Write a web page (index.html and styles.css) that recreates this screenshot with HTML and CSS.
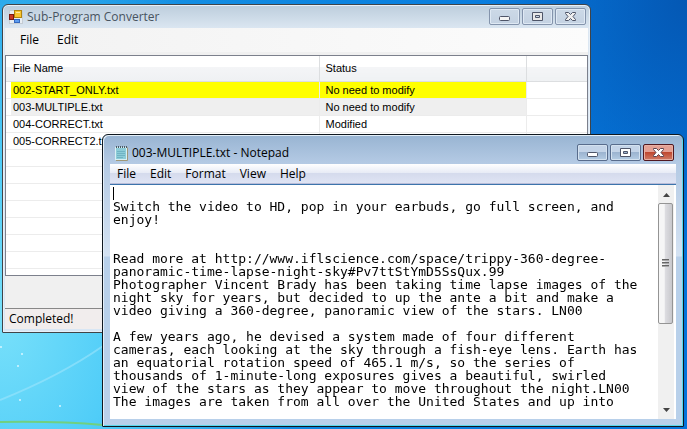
FILE: index.html
```html
<!DOCTYPE html>
<html lang="en">
<head>
<meta charset="utf-8">
<title>Desktop</title>
<link rel="stylesheet" href="styles.css">
</head>
<body>
<main class="desktop">
  <svg class="wallpaper" viewBox="0 0 687 429" preserveAspectRatio="none" aria-hidden="true">
    <path d="M0 400Q60 376 103 346" stroke="#9ce4fb" stroke-width="2" fill="none" opacity=".6"/>
    <path d="M0 422Q60 421 103 425" stroke="#70d080" stroke-width="2" fill="none"/>
    <g fill="#d8f6ff"><circle cx="60" cy="406" r="1"/><circle cx="22" cy="354" r="1"/><circle cx="18" cy="366" r="1"/><circle cx="1" cy="347" r="1"/><circle cx="20" cy="400" r="1"/></g>
  </svg>

  <section class="window converter" aria-label="Sub-Program Converter">
    <header class="titlebar">
      <svg class="app-icon" width="14" height="14" viewBox="0 0 14 14" aria-hidden="true">
        <rect x=".5" y=".5" width="13" height="13" fill="#e8edf2" stroke="#c4ccd4"/>
        <rect x="5.500" y=".5" width="7" height="7" fill="#f8c430" stroke="#b08410"/>
        <path d="M7 2.500h4" stroke="#fce8a0"/>
        <rect x=".5" y="4.500" width="4" height="5" fill="#c83824" stroke="#7c1810"/>
        <rect x="5.500" y="9.500" width="5" height="3" fill="#5c9cf0" stroke="#3468c0"/>
      </svg>
      <h1 class="title">Sub-Program Converter</h1>
      <div class="controls">
        <button class="control" aria-label="Minimize"><svg width="11" height="9" viewBox="0 0 11 9"><rect x=".5" y="4.500" width="10" height="4" rx="1" fill="#f4f4f4" stroke="#4e5568"/></svg></button>
        <button class="control" aria-label="Maximize"><svg width="11" height="9" viewBox="0 0 11 9"><path d="M.5 .5h10v8h-10zM3.500 3.500v2h4v-2z" fill="#e8e8e8" fill-rule="evenodd" stroke="#4e5568"/></svg></button>
        <button class="control" aria-label="Close"><svg width="11" height="9" viewBox="0 0 11 9"><path d="M.5 .5h3l2 2 2-2h3v1l-2.500 3 2.500 3v1h-3l-2-2-2 2h-3v-1l2.500-3-2.500-3z" fill="#f0f0f0" stroke="#4e5568"/></svg></button>
      </div>
    </header>
    <div class="client">
      <nav class="menubar">
        <button class="menu">File</button>
        <button class="menu">Edit</button>
      </nav>
      <div class="list">
        <table class="files">
          <colgroup><col class="col-name"><col class="col-status"><col></colgroup>
          <thead><tr><th>File Name</th><th>Status</th><th></th></tr></thead>
          <tbody>
            <tr class="changed"><td>002-START_ONLY.txt</td><td>No need to modify</td><td></td></tr>
            <tr class="selected"><td>003-MULTIPLE.txt</td><td>No need to modify</td><td></td></tr>
            <tr><td>004-CORRECT.txt</td><td>Modified</td><td></td></tr>
            <tr><td>005-CORRECT2.txt</td><td></td><td></td></tr>
            <tr><td></td><td></td><td></td></tr>
            <tr><td></td><td></td><td></td></tr>
            <tr><td></td><td></td><td></td></tr>
            <tr><td></td><td></td><td></td></tr>
            <tr><td></td><td></td><td></td></tr>
            <tr><td></td><td></td><td></td></tr>
            <tr><td></td><td></td><td></td></tr>
          </tbody>
        </table>
      </div>
      <footer class="status">Completed!</footer>
    </div>
  </section>

  <section class="window notepad" aria-label="Notepad">
    <header class="titlebar">
      <svg class="app-icon" width="15" height="16" viewBox="0 0 15 16" aria-hidden="true">
        <path d="M2 15.500h11.500v-13" fill="none" stroke="#a09878"/>
        <rect x="1.500" y="2.500" width="11" height="12" fill="#8cccd8" stroke="#d8f0f4"/>
        <path d="M3 6.500h8M3 8.500h8M3 10.500h8M3 12.500h6" stroke="#70b4c4"/>
        <path d="M2.500 1v2M4.500 1v2M6.500 1v2M8.500 1v2M10.500 1v2M12.500 1v2" stroke="#4c5c64"/>
      </svg>
      <h2 class="title">003-MULTIPLE.txt - Notepad</h2>
      <div class="controls">
        <button class="control" aria-label="Minimize"><svg width="11" height="9" viewBox="0 0 11 9"><rect x=".5" y="4.500" width="10" height="4" rx="1" fill="#fff" stroke="#4e5568"/></svg></button>
        <button class="control" aria-label="Maximize"><svg width="11" height="9" viewBox="0 0 11 9"><path d="M.5 .5h10v8h-10zM3.500 3.500v2h4v-2z" fill="#fff" fill-rule="evenodd" stroke="#4e5568"/></svg></button>
        <button class="control close" aria-label="Close"><svg width="11" height="9" viewBox="0 0 11 9"><path d="M.5 .5h3l2 2 2-2h3v1l-2.500 3 2.500 3v1h-3l-2-2-2 2h-3v-1l2.500-3-2.500-3z" fill="#fff" stroke="#5e4550"/></svg></button>
      </div>
    </header>
    <div class="client">
      <nav class="menubar">
        <button class="menu">File</button>
        <button class="menu">Edit</button>
        <button class="menu">Format</button>
        <button class="menu">View</button>
        <button class="menu">Help</button>
      </nav>
      <div class="editor">
        <textarea class="text" aria-label="Document text" spellcheck="false" autofocus>

Switch the video to HD, pop in your earbuds, go full screen, and
enjoy!


Read more at http://www.iflscience.com/space/trippy-360-degree-
panoramic-time-lapse-night-sky#Pv7ttStYmD5SsQux.99
Photographer Vincent Brady has been taking time lapse images of the
night sky for years, but decided to up the ante a bit and make a
video giving a 360-degree, panoramic view of the stars. LN00

A few years ago, he devised a system made of four different
cameras, each looking at the sky through a fish-eye lens. Earth has
an equatorial rotation speed of 465.1 m/s, so the series of
thousands of 1-minute-long exposures gives a beautiful, swirled
view of the stars as they appear to move throughout the night.LN00
The images are taken from all over the United States and up into</textarea>
        <span class="caret"></span>
        <div class="scrollbar">
          <button class="arrow" aria-label="Scroll up"><svg width="7" height="4" viewBox="0 0 7 4"><path d="M0 4L3.500 0 7 4z" fill="#444"/></svg></button>
          <div class="track"><div class="thumb"><svg width="7" height="8" viewBox="0 0 7 8"><path d="M0 .5h7M0 3.500h7M0 6.500h7" stroke="#666"/><path d="M0 1.500h7M0 4.500h7M0 7.500h7" stroke="#aaa"/></svg></div></div>
          <button class="arrow" aria-label="Scroll down"><svg width="7" height="4" viewBox="0 0 7 4"><path d="M0 0h7L3.500 4z" fill="#444"/></svg></button>
        </div>
      </div>
    </div>
  </section>
</main>
</body>
</html>
```
FILE: styles.css
```css
* { box-sizing: border-box; }

body {
  margin: 0;
  font: 12px/16px "Open Sans", "Noto Sans", sans-serif;
  color: #000;
}

button {
  margin: 0;
  padding: 0;
  border: 0;
  background: none;
  color: inherit;
  font: inherit;
}

.desktop {
  position: relative;
  min-height: 100vh;
  overflow: hidden;
  background:
    radial-gradient(ellipse 300px 400px at 0 75%, #78e0fa 0, #50cdf8 40%, rgba(40, 165, 236, 0) 100%),
    radial-gradient(ellipse 200px 260px at 100% 0, #0458b4 0, rgba(4, 88, 180, 0) 100%),
    linear-gradient(90deg, #1c9ae6 0%, #0c84e0 50%, #0474dc 100%);
}

.wallpaper { display: block; position: absolute; inset: 0; width: 100%; height: 100%; }

.window {
  position: absolute;
  display: flex;
  flex-direction: column;
  border: 1px solid #404448;
  border-radius: 6px 6px 1px 1px;
  overflow: hidden;
}

.converter {
  inset: 4px 96px 96px 2px;
  padding: 0 2px 3px;
  background: linear-gradient(#bccddc, #dce7f2 24px, #d8e6f4);
  box-shadow: inset 0 0 0 1px #e8f0f8;
}

.notepad {
  inset: 134px 3px 2px 102px;
  padding: 0 7px 7px;
  border-color: #101820;
  background: linear-gradient(#98b4d2, #b4cae4 28px, #d4e2f2 121px, #b8d0ea 122px);
  box-shadow: inset 1px 1px #e4eff8, inset -1px -1px #58d8ec;
}

.titlebar { display: flex; align-items: center; flex: none; height: 23px; padding: 0 2px 0 4px; }
.notepad .titlebar { height: 29px; padding: 6px 2px 0 4px; }

.title { margin: 0 auto 0 4px; font-size: 12px; font-weight: 400; color: #485460; }
.notepad .title { margin-left: 3px; color: #000; }

.controls { display: flex; gap: 2px; }

.control {
  display: flex;
  align-items: center;
  justify-content: center;
  width: 31px;
  height: 17px;
  border: 1px solid #8494ac;
  border-radius: 2px;
  background: linear-gradient(#ccd9e7, #c4d2e2);
  box-shadow: inset 0 0 0 1px #dfe9f4;
}

.notepad .control { border-color: #586c8c; background: linear-gradient(#c4d4e8 50%, #9cb4d0 50%, #b4cce4); box-shadow: inset 0 0 0 1px #d4e2f0; }
.notepad .close { border-color: #501820; background: linear-gradient(#e4a094 45%, #c04830 50%, #d07c68); box-shadow: inset 0 0 0 1px #e8b0a4; }

.client { display: flex; flex: 1; flex-direction: column; min-height: 0; background: #f0f0f0; }

.menubar { display: flex; align-items: center; flex: none; height: 24px; padding: 0 7px; background: linear-gradient(90deg, #f2f2f2, #fcfcfc); }
.menu { padding: 0 8px; }
.converter .menubar { gap: 2px; margin-bottom: 3px; }
.notepad .menubar { height: 20px; padding: 0; border-bottom: 1px solid #b8bcd8; background: linear-gradient(#fff, #e8ecf6 45%, #d4daec 45%, #dfe4f4); }
.notepad .menu { padding: 0 7px; }

.list { flex: 1; min-height: 0; margin-bottom: 32px; overflow: hidden; border: 1px solid #7c808c; background: #fff; }

.files { width: 100%; border-collapse: collapse; table-layout: fixed; font: 11px/16px "Liberation Sans", Arial, sans-serif; }
.col-name { width: 313px; }
.col-status { width: 207px; }
.files th, .files td { padding: 0 6px; border-right: 1px solid #ececec; border-bottom: 1px solid #ececec; text-align: left; font-weight: 400; white-space: nowrap; }
.files th:first-child, .files td:first-child { padding-left: 7px; }
.files th { height: 25px; border-color: #dcdee0; background: linear-gradient(#fff 45%, #f4f5f7 45%, #eff1f3); }
.files td { height: 17px; }
.files th:last-child, .files td:last-child { border-right: 0; }
.changed td { background: #ff0; }
.selected td { background: #efefef; }
.changed td:first-child { background: linear-gradient(90deg, #fff 5px, #ff0 5px); }
.selected td:first-child { background: linear-gradient(90deg, #fff 5px, #efefef 5px); }
.files tbody td:last-child { background: #fff; }

.status { flex: none; height: 21px; padding: 2px 4px; border-top: 1px solid #888; background: #f1eded; }

.editor { position: relative; display: flex; flex: 1; min-height: 0; padding-right: 2px; border-top: 1px solid #3c74ac; background: #fff; }

.text {
  flex: 1;
  min-width: 0;
  padding: 2px 3px;
  border: 0;
  outline: 0;
  resize: none;
  overflow: hidden;
  background: #fff;
  color: #000;
  caret-color: transparent;
  font: 13px/13px "DejaVu Sans Mono", monospace;
  white-space: pre;
}

.caret { position: absolute; top: 2px; left: 3px; width: 1px; height: 13px; background: #000; }

.scrollbar { display: flex; flex: none; flex-direction: column; width: 16px; padding: 1px 0; background: #f0f0f0; }
.arrow { display: flex; flex: none; align-items: center; justify-content: center; height: 17px; }
.track { flex: 1; padding: 0 1px 0 0; }
.thumb { display: flex; align-items: center; justify-content: center; height: 61%; border: 1px solid #949494; border-radius: 2px; background: linear-gradient(90deg, #f6f6f6 40%, #dcdce0 50%, #c8c8cc); }
```
